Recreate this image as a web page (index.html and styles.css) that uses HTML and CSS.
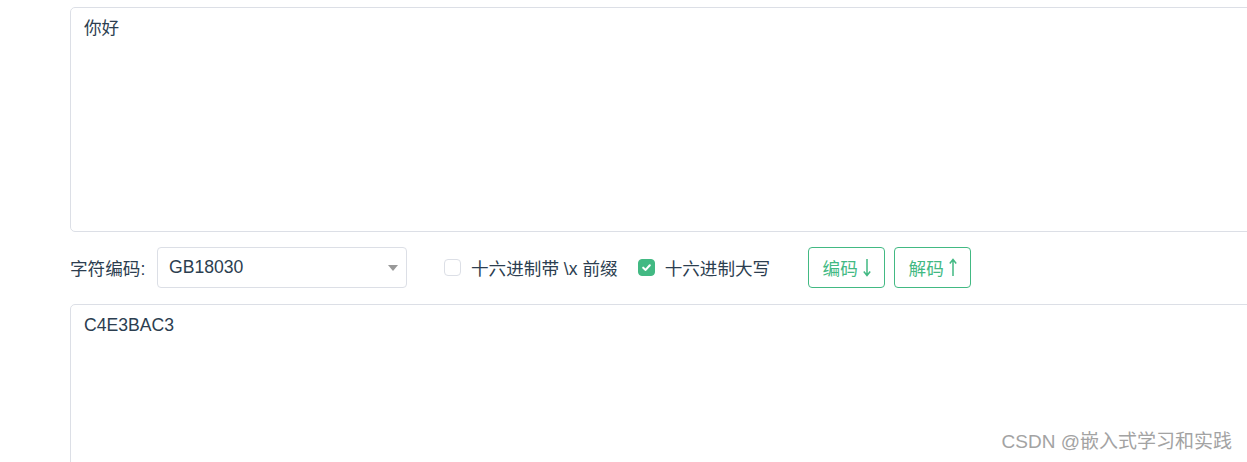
FILE: index.html
```html
<!DOCTYPE html>
<html lang="zh-CN">
<head>
    <meta charset="UTF-8">
    <title>编码转换</title>
    <link rel="stylesheet" href="styles.css">
</head>
<body>
    <div class="page">
        <textarea class="text-box top-box">你好</textarea>

        <div class="tool-row">
            <span class="field-label">字符编码:</span>
            <div class="select">
                <span>GB18030</span>
                <span class="select-arrow"></span>
            </div>

            <label class="check">
                <span class="check-box"></span>
                十六进制带 \x 前缀
            </label>
            <label class="check">
                <span class="check-box checked">
                    <svg width="11" height="11" viewBox="0 0 10 10"><path d="M2 5.2 L4.2 7.2 L8 3" fill="none" stroke="#fff" stroke-width="1.9" stroke-linecap="round" stroke-linejoin="round"/></svg>
                </span>
                十六进制大写
            </label>

            <div class="buttons">
                <button class="btn">编码<svg class="arrow" width="8" height="19" viewBox="0 0 8 19"><path d="M4 1 V17.5 M0.8 13.5 L4 17.5 L7.2 13.5" fill="none" stroke="currentColor" stroke-width="1.5"/></svg></button>
                <button class="btn">解码<svg class="arrow" width="8" height="19" viewBox="0 0 8 19"><path d="M4 18 V1.5 M0.8 5.5 L4 1.5 L7.2 5.5" fill="none" stroke="currentColor" stroke-width="1.5"/></svg></button>
            </div>
        </div>

        <textarea class="text-box bottom-box">C4E3BAC3</textarea>
    </div>

    <div class="watermark">CSDN @嵌入式学习和实践</div>
</body>
</html>
```

FILE: styles.css
```css
html, body {
    margin: 0;
    overflow: hidden;
    height: 100%;
}
body {
    font-family: "Liberation Sans", Arial, "Noto Sans CJK SC", sans-serif;
    color: #2c3e50;
    background: #fff;
    font-size: 17.6px;
}
.page {
    padding: 7px 0 0 70px;
    width: 1177px;
    height: 455px;
    overflow: hidden;
}
.text-box {
    display: block;
    box-sizing: border-box;
    width: 1220px;
    border: 1px solid #dcdfe6;
    border-radius: 5px;
    padding: 8px 13px;
    font-family: inherit;
    font-size: 17.6px;
    line-height: 24px;
    color: #2c3e50;
    resize: none;
    outline: none;
}
.top-box {
    height: 225px;
}
.bottom-box {
    height: 200px;
}
.tool-row {
    display: flex;
    align-items: center;
    height: 41px;
    margin: 15px 0 16px;
}
.field-label {
    margin-right: 9px;
    width: 78px;
    white-space: nowrap;
}
.select {
    box-sizing: border-box;
    width: 250px;
    height: 41px;
    border: 1px solid #dcdfe6;
    border-radius: 4px;
    display: flex;
    align-items: center;
    justify-content: space-between;
    padding: 0 8px 0 11px;
    margin-right: 37px;
}
.select-arrow {
    width: 0;
    height: 0;
    border-left: 5px solid transparent;
    border-right: 5px solid transparent;
    border-top: 6px solid #999;
    margin-top: 1px;
}
.check {
    display: flex;
    align-items: center;
    margin-right: 20px;
    white-space: nowrap;
}
.check-box {
    box-sizing: border-box;
    width: 17px;
    height: 17px;
    border: 1px solid #dcdfe6;
    border-radius: 4px;
    margin-right: 10px;
    display: flex;
    align-items: center;
    justify-content: center;
}
.check-box.checked {
    background: #42b983;
    border-color: #42b983;
}
.buttons {
    display: flex;
    gap: 9px;
    margin-left: 18px;
}
.btn {
    box-sizing: border-box;
    width: 77px;
    height: 41px;
    border: 1px solid #42b983;
    border-radius: 4px;
    background: #fff;
    color: #42b983;
    font-family: inherit;
    font-size: 17.6px;
    padding: 0;
    display: flex;
    align-items: center;
    justify-content: center;
}
.arrow {
    margin-left: 5px;
}
.watermark {
    position: absolute;
    right: 15px;
    bottom: 9px;
    font-size: 19px;
    color: #a3a3a3;
    text-shadow: 0 0 1px #fff;
}
```
